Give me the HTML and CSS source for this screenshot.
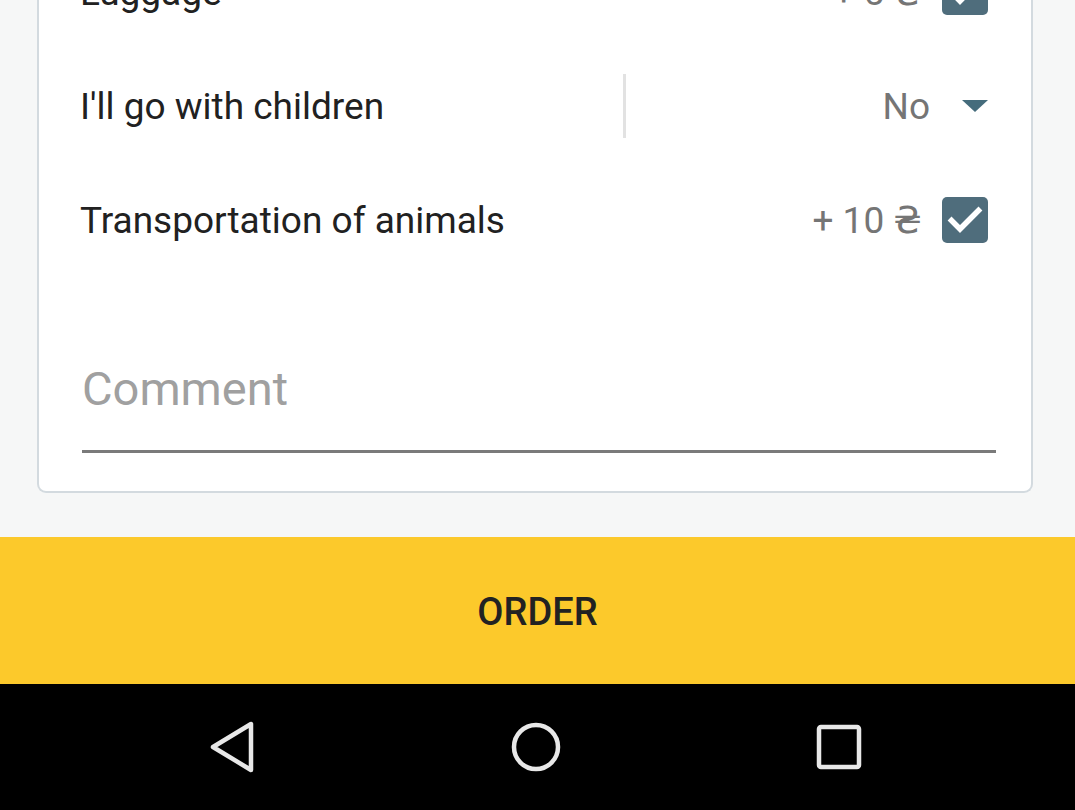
FILE: index.html
```html
<!DOCTYPE html>
<html lang="en">
<head>
<meta charset="utf-8">
<title>Order options</title>
<link rel="stylesheet" href="styles.css">
</head>
<body>
<div class="screen">
  <main class="content">
    <section class="card">
      <div class="row">
        <span class="label">Luggage</span>
        <span class="extra">
          <span class="price">+ 5 ₴</span>
          <span class="checkbox">
            <svg viewBox="0 0 46 46" width="46" height="46"><path d="M9.5 23.5 L18 32 L36.5 13.5" fill="none" stroke="#fff" stroke-width="5.5" stroke-linecap="square"/></svg>
          </span>
        </span>
      </div>
      <div class="row row-select">
        <span class="label">I'll go with children</span>
        <span class="divider"></span>
        <span class="select">
          <span class="select-value">No</span>
          <svg class="caret" viewBox="0 0 26 12" width="26" height="12"><path d="M0 0 H26 L13 12 Z" fill="#456c7c"/></svg>
        </span>
      </div>
      <div class="row">
        <span class="label">Transportation of animals</span>
        <span class="extra">
          <span class="price">+ 10 ₴</span>
          <span class="checkbox">
            <svg viewBox="0 0 46 46" width="46" height="46"><path d="M9.5 23.5 L18 32 L36.5 13.5" fill="none" stroke="#fff" stroke-width="5.5" stroke-linecap="square"/></svg>
          </span>
        </span>
      </div>
      <div class="comment">
        <span class="comment-placeholder">Comment</span>
      </div>
    </section>
  </main>
  <button class="order">ORDER</button>
  <nav class="navbar">
    <svg viewBox="0 0 48 52" width="48" height="52"><path d="M4 26 L42 3 L42 49 Z" fill="none" stroke="#e8e8e8" stroke-width="4.5" stroke-linejoin="round"/></svg>
    <svg viewBox="0 0 52 52" width="52" height="52"><circle cx="26" cy="26" r="22" fill="none" stroke="#e8e8e8" stroke-width="4.5"/></svg>
    <svg viewBox="0 0 48 48" width="48" height="48"><rect x="4" y="4" width="40" height="40" rx="2" fill="none" stroke="#e8e8e8" stroke-width="4.5"/></svg>
  </nav>
</div>
</body>
</html>
```
FILE: styles.css
```css
* { box-sizing: border-box; }
html, body {
  margin: 0;
  padding: 0;
  width: 1075px;
  height: 810px;
  overflow: hidden;
  font-family: Roboto, "DejaVu Sans", sans-serif;
}
.screen {
  display: flex;
  flex-direction: column;
  height: 810px;
}
.content {
  height: 537px;
  flex: 0 0 537px;
  background: #f6f7f7;
  padding: 0 42px 44px 37px;
  display: flex;
  flex-direction: column;
  justify-content: flex-end;
  overflow: hidden;
}
.card {
  flex: 0 0 auto;
  background: #fff;
  border: 2px solid #d3dadf;
  border-top: none;
  border-radius: 0 0 9px 9px;
  padding: 0 43px 38px 41px;
}
.row {
  height: 114px;
  display: flex;
  align-items: center;
  font-size: 37px;
  color: #212121;
}
.label { flex: 1 1 auto; }
.extra {
  display: flex;
  align-items: center;
  gap: 20px;
}
.price { color: #757575; }
.checkbox {
  width: 46px;
  height: 46px;
  border-radius: 5px;
  background: #4f6d7c;
  display: flex;
}
.row-select {
  display: grid;
  grid-template-columns: 543px 3px 1fr;
  align-items: center;
}
.divider {
  width: 3px;
  height: 64px;
  background: #e2e2e2;
}
.select {
  display: flex;
  align-items: center;
  justify-content: flex-end;
  gap: 32px;
}
.select-value { color: #757575; }
.caret { display: block; }
.comment {
  margin: 84px -8px 0 2px;
  padding-bottom: 33px;
  border-bottom: 3px solid #7a7a7a;
}
.comment-placeholder {
  display: block;
  font-size: 47px;
  line-height: 56px;
  color: #a0a0a0;
}
.order {
  flex: 0 0 147px;
  height: 147px;
  border: none;
  margin: 0;
  background: #fcc92b;
  color: #222;
  font-family: Roboto, "DejaVu Sans", sans-serif;
  font-size: 38px;
  font-weight: 500;
  padding: 2px 0 0 0;
}
.navbar {
  flex: 1 1 auto;
  background: #000;
  display: flex;
  align-items: center;
  justify-content: center;
  gap: 253px;
  padding: 0 4px 0 0;
}
.navbar svg { display: block; }
```
